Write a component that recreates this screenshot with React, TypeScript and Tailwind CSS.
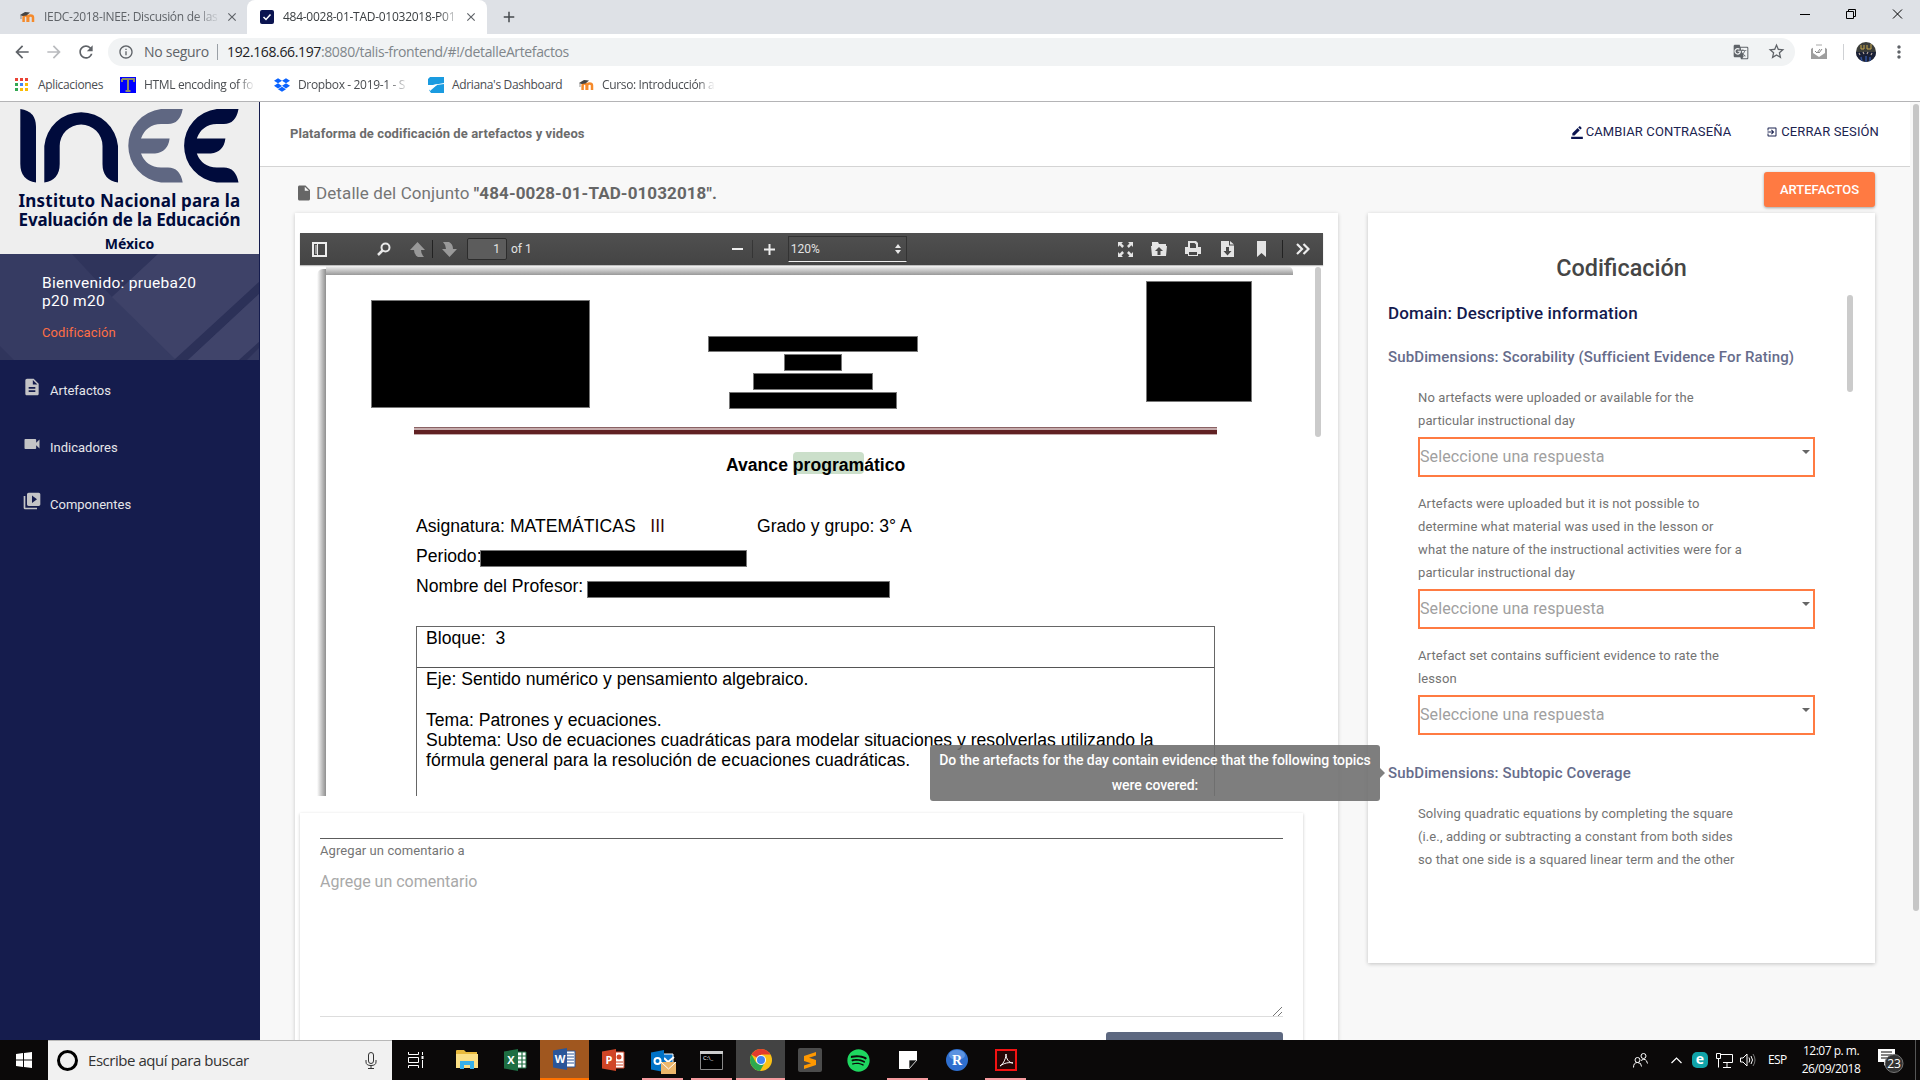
import React from "react";
import {
  MdInsertDriveFile,
  MdDescription,
  MdVideocam,
  MdVideoLibrary,
  MdBorderColor,
  MdExitToApp,
  MdArrowBack,
  MdArrowForward,
  MdRefresh,
  MdInfoOutline,
  MdStarBorder,
  MdMoreVert,
  MdClose,
  MdAdd,
  MdGTranslate,
} from "react-icons/md";
import { FaDropbox, FaSpotify } from "react-icons/fa";

const ui = "font-['Open_Sans','Noto_Sans',sans-serif]";

function Moodle() {
  return (
    <svg width="16" height="16" viewBox="0 0 16 16">
      <path d="M3.6 13V8.6q0-2.2 2-2.2t2 2.2V13M8.2 13V8.6q0-2.2 2.4-2.2t2.4 2.2V13" fill="none" stroke="#f58a2b" strokeWidth="2.5" />
      <path d="M0 6l5-3 5 .5-3.500 3-4 .5z" fill="#444" />
      <path d="M1 6v4" stroke="#666" strokeWidth=".7" />
    </svg>
  );
}

function TabStrip() {
  return (
    <div className="flex h-[34px] bg-[#dee1e6] text-[12px]">
      <div className="flex w-[247px] items-center pl-5">
        <Moodle />
        <span className="ml-2 w-[177px] overflow-hidden whitespace-nowrap tracking-[-0.3px] text-[#5f6368] [mask-image:linear-gradient(to_right,black_85%,transparent)]">
          IEDC-2018-INEE: Discusión de las
        </span>
        <MdClose className="ml-1 size-[14px] text-[#5f6368]" />
      </div>
      <div className="flex w-[240px] items-center rounded-t-lg bg-white pl-[13px]">
        <span className="flex size-[14px] items-center justify-center rounded-[2px] bg-[#0b1450]">
          <svg width="10" height="10" viewBox="0 0 10 10"><path d="M1.500 5l2.500 2.500 4.500-5" fill="none" stroke="#fff" strokeWidth="1.500" /></svg>
        </span>
        <span className="ml-[9px] w-[177px] overflow-hidden whitespace-nowrap tracking-[-0.27px] text-[#3c4043] [mask-image:linear-gradient(to_right,black_88%,transparent)]">
          484-0028-01-TAD-01032018-P01
        </span>
        <MdClose className="ml-1 size-[14px] text-[#5f6368]" />
      </div>
      <div className="flex flex-1 items-center pl-[13px]">
        <MdAdd className="size-[18px] text-[#45494d]" />
      </div>
      <svg className="h-[30px] w-[120px]" viewBox="0 0 120 30" fill="none" stroke="#000" strokeWidth="1">
        <path d="M0 14.500h10M46.500 11.500h7v7h-7zM48.500 11.500v-2h7v7h-2M93 9.500l9 9M102 9.500l-9 9" />
      </svg>
    </div>
  );
}

function AddressBar() {
  return (
    <div className="flex h-[35px] items-center bg-white pl-3 text-[#5f6368]">
      <MdArrowBack className="size-5" />
      <MdArrowForward className="ml-3 size-5 text-[#b9bbbe]" />
      <MdRefresh className="ml-3 size-5" />
      <div className="ml-3 flex h-7 w-[1687px] items-center rounded-full bg-[#f1f3f4] pl-[10px] text-[14px]">
        <MdInfoOutline className="size-4" />
        <span className="ml-[10px] w-[66px] whitespace-nowrap tracking-[-0.28px]">No seguro</span>
        <span className="ml-[7px] h-4 w-px bg-[#9aa0a6]" />
        <span className="ml-[9px] tracking-[-0.37px] whitespace-nowrap text-[#80868b]">
          <span className="text-[#202124]">192.168.66.197</span>:8080/talis-frontend/#!/detalleArtefactos
        </span>
        <MdGTranslate className="ml-auto size-4" />
        <MdStarBorder className="mr-[9px] ml-[18px] size-[19px]" />
      </div>
      <svg className="ml-4 size-4" viewBox="0 0 16 16">
        <path d="M0 5l3-2h10l3 2v10H0z" fill="#9e9e9e" />
        <path d="M2 3h12v6l-6 4-6-4z" fill="#fff" />
        <path d="M4 7l2 2 3-4M7 8l1 1 3-4" fill="none" stroke="#888" />
        <path d="M5 1h6" stroke="#aaa" />
      </svg>
      <span className="ml-4 h-4 w-px bg-[#cfd1d4]" />
      <svg className="ml-3 size-5" viewBox="0 0 20 20">
        <clipPath id="av"><circle cx="10" cy="10" r="10" /></clipPath>
        <g clipPath="url(#av)">
          <rect width="20" height="20" fill="#3b3d3a" />
          <path d="M0 10h20v10H0z" fill="#1a2036" />
          <path d="M5 3v4h3V3M11 3v4h4V2" stroke="#c9a84a" fill="none" strokeWidth="1" />
          <path d="M3 11l1 2M7 10l1 2M12 10l-1 2M16 11l-1 2" stroke="#b9a9a0" strokeWidth="1.200" />
          <path d="M5 15l1 5M10 14v6M14 15v5" stroke="#33529b" strokeWidth="1.500" />
        </g>
      </svg>
      <MdMoreVert className="ml-[13px] size-5" />
    </div>
  );
}

function Bookmarks() {
  const dots = ["#ea4335", "#ea4335", "#ea4335", "#34a853", "#4285f4", "#fbbc04", "#34a853", "#fbbc04", "#fbbc04"];
  return (
    <div className="flex h-[33px] items-center border-b border-[#b4b4b6] bg-white pb-px pl-[15px] text-[12px] tracking-[-0.35px] whitespace-nowrap text-[#4a4d51]">
      <svg width="13" height="13" viewBox="0 0 13 13">
        {dots.map((c, i) => (
          <rect key={i} x={(i % 3) * 5} y={Math.floor(i / 3) * 5} width="3" height="3" fill={c} />
        ))}
      </svg>
      <span className="ml-[10px] w-[66px]">Aplicaciones</span>
      <svg className="ml-4" width="16" height="16" viewBox="0 0 16 16">
        <rect width="16" height="16" fill="#00f" />
        <path d="M2 2h12v3M2 5V2M8 2v12M5.500 14h5" stroke="#8d8c6a" strokeWidth="2" fill="none" />
      </svg>
      <span className="ml-2 w-[111px] overflow-hidden [mask-image:linear-gradient(to_right,black_85%,transparent)]">HTML encoding of fo</span>
      <FaDropbox className="ml-[19px] size-4 text-[#0a63ff]" />
      <span className="ml-2 w-[112px] overflow-hidden [mask-image:linear-gradient(to_right,black_80%,transparent)]">Dropbox - 2019-1 - S</span>
      <svg className="ml-[18px]" width="16" height="16" viewBox="0 0 16 16">
        <path d="M2 0h14v6L5 8H0V2zM16 8v7H5z M3 16l-2-3 8-5 7-1v9z" fill="#1a9be0" />
        <path d="M0 9l10-2-8 7" fill="#fff" />
      </svg>
      <span className="ml-2 w-[111px]">Adriana's Dashboard</span>
      <span className="ml-[16px]"><Moodle /></span>
      <span className="ml-[7px] w-[113px] overflow-hidden [mask-image:linear-gradient(to_right,black_85%,transparent)]">Curso: Introducción a</span>
    </div>
  );
}

function Sidebar() {
  const items = [
    { Icon: MdDescription, label: "Artefactos" },
    { Icon: MdVideocam, label: "Indicadores" },
    { Icon: MdVideoLibrary, label: "Componentes" },
  ];
  return (
    <aside className="flex w-[260px] flex-col border-r border-[#151c4d] bg-[#151c4d]">
      <div className="flex h-[152px] flex-col items-center bg-[#eee] font-['Noto_Sans'] font-bold whitespace-nowrap text-[#000b3c]">
        <svg className="mt-[7px] h-[75px] w-full shrink-0" viewBox="0 0 259 75">
          <path d="M20.300 0Q36 2 36 18V73.500Q20.300 71 20.300 55z" fill="#000b3c" />
          <path d="M44.300 73.500V37a37 37 0 0 1 73.700 0V73.500Q102.500 71 102.500 55V37a21.400 21.400 0 0 0-42.800 0V55Q59.700 71 44.300 73.500z" fill="#000b3c" />
          <path d="M182.700 0H161a37 37 0 0 0 0 73.500H182.700Q180 58.500 168 58.500H161Q146 58 141 44.500H155Q168 43 169.600 29.500H141Q146 15.500 161 15H168Q180 15 182.700 0z" fill="#5f6782" />
          <path transform="translate(55.800 0)" d="M182.700 0H161a37 37 0 0 0 0 73.500H182.700Q180 58.500 168 58.500H161Q146 58 141 44.500H155Q168 43 169.600 29.500H141Q146 15.500 161 15H168Q180 15 182.700 0z" fill="#000b3c" />
        </svg>
        <span className="mt-[7px] text-[17px] leading-[19px] tracking-[0.2px]">Instituto Nacional para la</span>
        <span className="text-[17px] leading-[19px] tracking-[-0.18px]">Evaluación de la Educación</span>
        <span className="mt-[6px] text-[14px] leading-[17px]">México</span>
      </div>
      <div className="relative h-[106px] overflow-hidden bg-[#363b62]">
        <svg className="absolute inset-0" width="259" height="106" viewBox="0 0 259 106">
          <path d="M72 0h86l-46 43z" fill="#2f345b" />
          <path d="M158 0h101v28L176 106 112 43z" fill="#3e4268" />
          <path d="M259 28v12L188 106h-14z" fill="#2c3158" />
          <path d="M259 40v48l-20 18h-51z" fill="#40446a" />
          <path d="M259 88v6l-12 12h-8z" fill="#2c3158" />
          <path d="M0 92l14 14H0z" fill="#30355c" />
        </svg>
        <div className="relative pt-[20px] pl-[42px] text-white">
          <p className="w-[180px] text-[15.500px] leading-[18px] tracking-[0.28px]">Bienvenido: prueba20<br />p20 m20</p>
          <p className="mt-[14px] text-[13px] leading-[18px] tracking-[0.1px] text-[#ff6f45]">Codificación</p>
        </div>
      </div>
      <nav className="flex flex-col text-[13px] text-[#e6e6ea]">
        {items.map(({ Icon, label }) => (
          <div key={label} className="flex h-[57px] items-center pt-1 pl-[22px]">
            <Icon className="mr-2 -mt-2 size-5 text-[#c4c4c6]" />
            <span>{label}</span>
          </div>
        ))}
      </nav>
    </aside>
  );
}

function Sep() {
  return <span className="block h-[18px] w-px bg-[#222]" />;
}

function PdfToolbar() {
  return (
    <div className="flex h-8 w-[1023px] items-center bg-linear-to-b from-[#505050] to-[#444] text-[12px] text-[#e3e3e3] shadow-[0_1px_1px_rgba(0,0,0,0.25)]">
      <svg className="ml-[12px] size-[15px]" viewBox="0 0 15 15">
        <path d="M1 1h13v13H1z" fill="none" stroke="#eee" strokeWidth="2" />
        <path d="M3 3h2v9H3z" fill="#999" /><path d="M5.500 2v11" stroke="#eee" />
      </svg>
      <svg className="ml-[50px] size-[14px]" viewBox="0 0 14 14" fill="none" stroke="#e8e8e8" strokeWidth="2">
        <circle cx="8.500" cy="5.500" r="4" /><path d="M5.500 8.500L1 13" strokeWidth="2.500" />
      </svg>
      <svg className="ml-[19px] size-[15px]" viewBox="0 0 15 15" fill="#999"><path d="M7.500 0L15 8h-4q0 4 3 7H8q-4-2-4-7H0z" /></svg>
      <span className="ml-[7px]"><Sep /></span>
      <svg className="ml-[9px] size-[15px]" viewBox="0 0 15 15" fill="#999"><path d="M7.500 15L0 7h4q0-4-3-7h6q4 2 4 7h4z" /></svg>
      <span className="ml-[10px] flex h-[22px] w-[40px] items-center justify-end rounded-[2px] border border-[#2c2c2c] bg-[#5c5c5c] pr-[6px]">1</span>
      <span className="ml-[4px]">of 1</span>
      <span className="ml-[200px] h-[2px] w-[11px] bg-[#eee]" />
      <span className="ml-[9px] opacity-50"><Sep /></span>
      <svg className="ml-[11px] size-[11px]" viewBox="0 0 11 11"><path d="M0 5.500h11M5.500 0v11" stroke="#eee" strokeWidth="2" /></svg>
      <span className="ml-[13px] flex h-[26px] w-[119px] items-center border border-b-[#eee] border-[#333] pl-[2px] text-[12px]">
        120%
        <svg className="mr-[5px] ml-auto" width="6" height="10" viewBox="0 0 6 10" fill="#e8e8e8"><path d="M3 0l3 4H0zM3 10l3-4H0z" /></svg>
      </span>
      <svg className="ml-auto size-[15px]" viewBox="0 0 15 15" fill="#e4e4e4">
        <path d="M0 0h5L3.500 1.500 6 4 4.200 6 1.700 3.300 0 5zM15 0v5l-1.700-1.700L10.800 6 9 4l2.500-2.500L10 0zM0 15v-5l1.700 1.700L4.200 9 6 11l-2.500 2.500L5 15zM15 15h-5l1.500-1.500L9 11l1.800-2 2.500 2.700L15 10z" />
      </svg>
      <svg className="ml-[18px] size-4" viewBox="0 0 16 16" fill="#e4e4e4"><path fillRule="evenodd" d="M1 1h6l1 2h7v2H1zM0 5h16l-1 10H1zM8 6L4 10h2.500v4h3v-4H12z" /></svg>
      <svg className="ml-[18px] size-4" viewBox="0 0 16 16" fill="#e4e4e4"><path fillRule="evenodd" d="M3 0h8l2 2v4h3v7h-3v2H3v-2H0V6h3zM5 2v5h6V3.500L9.500 2zM4 11v3h8v-3z" /></svg>
      <svg className="ml-[20px] h-4 w-[13px]" viewBox="0 0 13 16" fill="#e4e4e4"><path fillRule="evenodd" d="M0 0h8v4.500h5V16H0zM5 6v4H2.500l4 4.500 4-4.500H8V6zM9 0l4 3.500H9z" /></svg>
      <svg className="ml-[23px] h-4 w-[9px]" viewBox="0 0 9 16" fill="#e4e4e4"><path d="M0 0h9v16L4.500 12 0 16z" /></svg>
      <span className="ml-[16px]"><Sep /></span>
      <svg className="mr-[13px] ml-[13px] h-3 w-[14px]" viewBox="0 0 14 12" fill="none" stroke="#eee" strokeWidth="2.200"><path d="M1 1l5 5-5 5M7.500 1l5 5-5 5" /></svg>
    </div>
  );
}

function Bar({ className }: { className: string }) {
  return <span className={"block border border-[#777] bg-black " + className} />;
}

function PdfPage() {
  return (
    <div className="flex h-[531px] w-[1023px] overflow-hidden">
      <div className="mt-[4px] ml-[17px] w-[9px] shrink-0 rounded-tl-md bg-linear-to-r from-white to-[#8f8f8f]" />
      <div className="w-[968px] shrink-0 font-['Liberation_Sans'] text-[17.600px] leading-[20.200px] whitespace-pre text-black">
        <div className="mt-px h-[9px] w-[967px] rounded-tr-md bg-linear-to-b from-[#f4f4f4] to-[#999]" />
        <div className="flex h-[152px] items-start">
          <Bar className="mt-[25px] ml-[45px] h-[108px] w-[219px]" />
          <div className="mt-[61px] ml-[118px] flex w-[210px] flex-col items-center gap-[2px]">
            <Bar className="h-[16px] w-[210px]" />
            <Bar className="h-[17px] w-[58px]" />
            <Bar className="h-[17px] w-[120px]" />
            <Bar className="h-[17px] w-[168px]" />
          </div>
          <Bar className="mt-[6px] ml-[228px] h-[121px] w-[106px]" />
        </div>
        <div className="ml-[88px] h-[8px] w-[803px] border-t border-b border-t-[#8a6264] border-b-[#c3a9aa] bg-linear-to-b from-[#c6acad] from-[33%] to-[#612123] to-[33%]" />
        <div className="mt-[17px] ml-[400px] flex h-[26px] items-center font-bold">
          <span>Avance </span>
          <span className="-mt-[4px] h-[22px] rounded-[4px] bg-[#cbdfca] pt-[3px]">program</span>
          <span>ático</span>
        </div>
        <div className="mt-[38px] ml-[90px] flex h-[21px]">
          <span className="w-[341px]">Asignatura: MATEMÁTICAS   <span className="text-[#3a0808]">III</span></span>
          <span>Grado y grupo: 3° A</span>
        </div>
        <div className="mt-[9px] ml-[90px] flex h-[21px]">
          <span className="w-[64px]">Periodo:</span>
          <Bar className="mt-[4px] h-[17px] w-[267px]" />
        </div>
        <div className="mt-[9px] ml-[90px] flex h-[21px]">
          <span className="w-[171px]">Nombre del Profesor:</span>
          <Bar className="mt-[5px] h-[17px] w-[303px]" />
        </div>
        <div className="mt-[29px] ml-[90px] h-[200px] w-[799px] border-x border-t border-[#666]">
          <p className="h-[41px] border-b border-[#555] pt-px pl-[9px]">Bloque:  3</p>
          <div className="pl-[9px] pt-px">
            <p>Eje: Sentido numérico y pensamiento algebraico.</p>
            <p className="mt-[20.400px]">Tema: Patrones y ecuaciones.</p>
            <p>Subtema: Uso de ecuaciones cuadráticas para modelar situaciones y resolverlas utilizando la</p>
            <p>fórmula general para la resolución de ecuaciones cuadráticas.</p>
          </div>
        </div>
      </div>
      <div className="mt-[2px] ml-[21px] h-[170px] w-[6px] rounded-full bg-[#cbcbcb]" />
    </div>
  );
}

function Viewer() {
  return (
    <section className="h-[840px] w-[1043px] bg-white pt-5 pl-[5px] shadow-[0_1px_4px_rgba(0,0,0,0.2)]">
      <PdfToolbar />
      <PdfPage />
      <div className="mt-[17px] h-[260px] w-[1003px] bg-white px-[20px] pt-[25px] shadow-[0_1px_3px_rgba(0,0,0,0.22)]">
        <div className="h-px bg-[#5c5c5c]" />
        <p className="mt-[3px] text-[13px] leading-[18px] tracking-[0.08px] text-[#757575]">Agregar un comentario a</p>
        <div className="relative mt-[7px] h-[150px] border-b border-[#ddd] pt-[3px] text-[16px] leading-6 text-[#a9a9a9]">
          Agrege un comentario
          <svg className="absolute right-px bottom-0" width="9" height="9" viewBox="0 0 9 9"><path d="M0 9l9-9M5 9l4-4" stroke="#777" /></svg>
        </div>
        <div className="mt-[15px] ml-auto h-10 w-[177px] rounded-[3px] bg-[#5d6880]" />
      </div>
    </section>
  );
}

function Question({ lines, gap }: { lines: string[]; gap: string }) {
  return (
    <div className={gap}>
      {lines.map((l) => (
        <p key={l} className="text-[13px] leading-[23px] tracking-[0.11px] text-[#737373]">{l}</p>
      ))}
    </div>
  );
}

function Answer() {
  return (
    <div className="mt-[5px] flex h-10 w-[397px] items-start justify-between border-2 border-[#ff7b42] pr-[3px] text-[16px] leading-[36px] tracking-[0.1px] text-[#a0a0a0]">
      <span>Seleccione una respuesta</span>
      <span className="mt-[11px] border-x-[4px] border-t-[4px] border-x-transparent border-t-[#666]" />
    </div>
  );
}

function Coding() {
  return (
    <section className="relative h-[750px] w-[507px] bg-white shadow-[0_1px_4px_rgba(0,0,0,0.22)]">
      <h2 className="pt-[41px] text-center text-[23.400px] leading-[28px] font-medium text-[#454545]">Codificación</h2>
      <div className="pl-5">
        <h3 className="mt-[19px] text-[17px] leading-6 font-medium tracking-[0.15px] text-[#141a4e]">Domain: Descriptive information</h3>
        <h4 className="mt-5 text-[15px] leading-6 font-medium tracking-[0.12px] text-[#666c8b]">SubDimensions: Scorability (Sufficient Evidence For Rating)</h4>
        <div className="pl-[30px]">
          <Question gap="mt-[17px]" lines={["No artefacts were uploaded or available for the", "particular instructional day"]} />
          <Answer />
          <Question
            gap="mt-[15px]"
            lines={[
              "Artefacts were uploaded but it is not possible to",
              "determine what material was used in the lesson or",
              "what the nature of the instructional activities were for a",
              "particular instructional day",
            ]}
          />
          <Answer />
          <Question gap="mt-[15px]" lines={["Artefact set contains sufficient evidence to rate the", "lesson"]} />
          <Answer />
        </div>
        <h4 className="mt-[26px] text-[15px] leading-6 font-medium tracking-[0.12px] text-[#666c8b]">SubDimensions: Subtopic Coverage</h4>
        <div className="pl-[30px]">
          <Question
            gap="mt-[17px]"
            lines={[
              "Solving quadratic equations by completing the square",
              "(i.e., adding or subtracting a constant from both sides",
              "so that one side is a squared linear term and the other",
            ]}
          />
        </div>
      </div>
      <span className="absolute top-[82px] left-[479px] h-[97px] w-[6px] rounded-full bg-[#cbcbcb]" />
      <div className="absolute top-[532px] right-[495px] flex items-center">
        <div className="w-[450px] rounded-[3px] bg-[#707070]/90 py-[3px] text-center text-[14px] leading-[25px] font-medium tracking-[-0.05px] text-white">
          Do the artefacts for the day contain evidence that the following topics were covered:
        </div>
        <span className="-mr-[5px] border-y-[5px] border-l-[5px] border-y-transparent border-l-[#808080]" />
      </div>
    </section>
  );
}

function Office({ color, letter, children }: { color: string; letter: string; children: React.ReactNode }) {
  return (
    <svg width="24" height="22" viewBox="0 0 24 22">
      {children}
      <path d="M0 2.500L14 0v22L0 19.500z" fill={color} />
      <text x="7" y="15" fontSize="11" fontWeight="700" textAnchor="middle" fill="#fff">{letter}</text>
    </svg>
  );
}

function Slot({ className, children }: { className?: string; children: React.ReactNode }) {
  return <div className={"flex h-10 w-[49px] shrink-0 items-center justify-center " + (className ?? "")}>{children}</div>;
}

const running = "relative after:absolute after:inset-x-[4px] after:bottom-0 after:h-[2px] after:bg-[#f59a9e]";

function Taskbar() {
  return (
    <footer className="flex h-10 bg-[#0b0909] text-white">
      <div className="flex w-12 items-center justify-center">
        <svg width="16" height="16" viewBox="0 0 16 16" fill="#fff"><path d="M0 2l7-1v6.500H0zM8 .9L16 0v7.500H8zM0 8.500h7V15l-7-1zM8 8.500h8V16l-8-1.100z" /></svg>
      </div>
      <div className="flex w-[344px] items-center border-t border-[#b8b8b8] bg-[#f1f1f1] pl-[9px] text-[#333]">
        <span className="size-[21px] rounded-full border-[3px] border-black" />
        <span className="ml-[10px] text-[15px] tracking-[-0.45px] whitespace-nowrap">Escribe aquí para buscar</span>
        <svg className="mr-[15px] ml-auto" width="12" height="17" viewBox="0 0 12 17" fill="none" stroke="#333"><rect x="3.500" y=".5" width="5" height="11" rx="2.500" /><path d="M1 8v2q0 3.500 5 3.500T11 10V8M6 13.500V16.500M3 16.500h6" /></svg>
      </div>
      <Slot className="-ml-px">
        <svg width="17" height="16" viewBox="0 0 17 16" fill="none" stroke="#fff"><path d="M1.500 0v2.500h10V0M1.500 5.500h10v5h-10zM1.500 16v-2.500h10V16M15.500 0v3M15.500 8v8" /><path d="M14.500 4h2v3h-2z" fill="#fff" stroke="none" /></svg>
      </Slot>
      <Slot className="ml-[2px]">
        <svg width="22" height="20" viewBox="0 0 22 20"><path d="M0 1q0-1 1-1h7l2 2h11v16H0z" fill="#e8b93c" /><path d="M0 4h22v14H0z" fill="#fbdf85" /><path d="M4 11h14v8h-4v-4H8v4H4z" fill="#37b0ea" /></svg>
      </Slot>
      <Slot>
        <Office color="#1e6e42" letter="X"><path d="M13 3h9v16h-9z" fill="#fff" stroke="#1e6e42" /><path d="M14 7h8M14 11h8M14 15h8M18 3v16" stroke="#1e6e42" strokeWidth="1.200" /></Office>
      </Slot>
      <Slot className="border-b-2 border-[#ff7200] bg-[#a0571f]">
        <Office color="#2a5699" letter="W"><path d="M13 3h9v16h-9z" fill="#fff" stroke="#2a5699" /><path d="M14 6h7M14 9h7M14 12h7M14 15h7" stroke="#2a5699" /></Office>
      </Slot>
      <Slot>
        <Office color="#d04526" letter="P"><path d="M13 3h9v16h-9z" fill="#fff" stroke="#d04526" /><circle cx="17" cy="8" r="2.500" fill="#d04526" /><path d="M14 13h7M14 16h7" stroke="#d04526" /></Office>
      </Slot>
      <Slot className={running}>
        <svg className="mt-[3px] ml-[2px]" width="25" height="24" viewBox="0 0 25 24"><path d="M12 4h10v13H12z" fill="#0f78d0" stroke="#fff" /><path d="M13 8l4 4 6-5" stroke="#fff" strokeWidth="2" fill="none" /><path d="M0 2.500L13 0v22L0 19.500z" fill="#0072c6" /><circle cx="6.500" cy="11" r="3" fill="none" stroke="#fff" strokeWidth="2" /><path d="M10 12h15v12H10z" fill="#ecb66b" /><path d="M10 12l7.500 7 7.500-7" stroke="#fff" fill="none" /></svg>
      </Slot>
      <Slot className={running}>
        <svg width="23" height="19" viewBox="0 0 23 19"><path d="M.5.500h22v18H.5z" fill="#000" stroke="#888" /><path d="M0 0h23v3H0z" fill="#ccc" /><text x="3" y="9" fontSize="6" fill="#fff">C:\_</text></svg>
      </Slot>
      <Slot className="relative bg-[#434343] after:absolute after:inset-x-0 after:bottom-0 after:h-[2px] after:bg-[#f59a9e]">
        <svg width="22" height="22" viewBox="0 0 22 22"><circle cx="11" cy="11" r="11" fill="#fbc116" /><path d="M11 11L1.500 5.500A11 11 0 0 1 20.500 5.500H11z" fill="#e33b2e" /><path d="M1.500 5.500A11 11 0 0 0 10 22l4.800-8.500L6.200 13.700z" fill="#2da94f" /><circle cx="11" cy="11" r="5" fill="#fff" /><circle cx="11" cy="11" r="4" fill="#4285f4" /></svg>
      </Slot>
      <Slot>
        <svg width="24" height="24" viewBox="0 0 24 24"><rect width="24" height="24" rx="2" fill="#4b4b4b" /><path d="M18 4L6 8v5l7 2.200L6 17.500V21l12-4v-5l-7-2.200 7-2.300z" fill="#ff9800" /></svg>
      </Slot>
      <Slot><FaSpotify className="size-[23px] text-[#1ed760]" /></Slot>
      <Slot className={running}>
        <svg width="18" height="18" viewBox="0 0 18 18"><path d="M0 0h18v9l-8 9H0z" fill="#fff" /><path d="M10 9h8l-8 9z" fill="#111" stroke="#fff" strokeWidth=".7" /></svg>
      </Slot>
      <Slot>
        <svg width="22" height="22" viewBox="0 0 22 22"><circle cx="11" cy="11" r="11" fill="#2f6fcf" /><ellipse cx="11" cy="6" rx="8" ry="5" fill="#7cabec" opacity=".6" /><text x="11" y="16" textAnchor="middle" fontSize="14" fontWeight="700" fill="#fff" className="font-['Liberation_Serif']">R</text></svg>
      </Slot>
      <Slot className={running}>
        <svg width="22" height="22" viewBox="0 0 22 22"><path d="M1 1h20v20H1z" fill="#250606" stroke="#f31212" strokeWidth="2" /><path d="M5 17c2-1 6-6 6-12 0 5 3 9 7 9-4-1-9 0-13 3z" fill="none" stroke="#fff" /></svg>
      </Slot>
      <div className="ml-auto flex w-[284px] items-center text-[12px]">
        <svg className="ml-[2px] shrink-0" width="15" height="15" viewBox="0 0 15 15" fill="none" stroke="#fff"><circle cx="10.500" cy="3" r="2.500" /><circle cx="4.500" cy="7" r="2.500" /><path d="M.5 14.500q0-5 4-5t4 4M8 7.500q5-3.500 6.500 3" /></svg>
        <svg className="ml-[23px] shrink-0" width="11" height="7" viewBox="0 0 11 7" fill="none" stroke="#fff" strokeWidth="1.200"><path d="M.5 6l5-5 5 5" /></svg>
        <span className="ml-[10px] flex size-4 shrink-0 items-center justify-center rounded-[5px] bg-[#10a3a8] pb-[2px] text-[14px] leading-none font-bold">e</span>
        <svg className="ml-[8px] shrink-0" width="17" height="15" viewBox="0 0 17 15" fill="none" stroke="#fff"><path d="M5 1.500h11.500v8H7M11 10v4M7 14.500h8M.5.500h4v5h-4zM2.500 5.500v9" /></svg>
        <svg className="ml-[7px] shrink-0" width="16" height="14" viewBox="0 0 16 14" fill="none" stroke="#fff"><path d="M.5 5h2.500l4-4v12l-4-4H.5zM9 4.500q1.500 2.500 0 5M11 3q3 4 0 8" /><path d="M13 1q4 6 0 12" stroke="#777" /></svg>
        <span className="ml-[12px] w-[20px] shrink-0 text-[12px] tracking-[-0.6px]">ESP</span>
        <div className="ml-[12px] w-[62px] shrink-0 text-center leading-[18px] tracking-[-0.5px] whitespace-nowrap">12:07 p. m.<br />26/09/2018</div>
        <svg className="ml-[16px] shrink-0" width="27" height="25" viewBox="0 0 27 25"><path d="M0 1h17v13H9l-3 4v-4H0z" fill="#fff" /><path d="M3 4h11M3 7h11M3 10h8" stroke="#0b0909" /><circle cx="16" cy="15.500" r="9" fill="#333" stroke="#777" /><text x="16" y="20" fontSize="12" textAnchor="middle" fill="#fff">23</text></svg>
      </div>
      <span className="mr-[4px] h-full w-px bg-[#555]" />
    </footer>
  );
}

export default function App() {
  return (
    <div className={"flex h-[1080px] w-[1920px] flex-col overflow-hidden bg-white " + ui}>
      <TabStrip />
      <AddressBar />
      <Bookmarks />
      <div className="flex h-[938px] overflow-hidden font-[Roboto]">
        <Sidebar />
        <main className="w-[1650px] bg-[#f8f8f8]">
          <header className="flex h-[65px] items-center border-b border-[#d4d4d4] bg-white pl-[30px] text-[13px]">
            <span className="font-bold tracking-[0.1px] text-[#6c6c6c]">Plataforma de codificación de artefactos y videos</span>
            <span className="ml-auto flex items-center pb-1 tracking-[0.12px] text-[#1b2350]">
              <MdBorderColor className="mr-[2px] size-[14px] text-[#0b1450]" />CAMBIAR CONTRASEÑA
            </span>
            <span className="mr-[31px] ml-[35px] flex items-center pb-1 tracking-[0.12px] text-[#1b2350]">
              <MdExitToApp className="mr-[3px] size-[12px]" />CERRAR SESIÓN
            </span>
          </header>
          <div className="flex h-[46px] items-start justify-between pr-[35px] pl-[35px]">
            <h1 className="flex items-center pt-[14px] text-[17px] leading-6 tracking-[0.1px] text-[#757575]">
              <MdInsertDriveFile className="mr-[3px] size-[18px] text-[#666]" />
              <span>Detalle del Conjunto <b className="text-[#666]">"484-0028-01-TAD-01032018".</b></span>
            </h1>
            <button className="mt-[5px] h-[35px] w-[111px] rounded-[3px] bg-[#ff7a42] text-[13px] font-medium text-white shadow-[0_1px_3px_rgba(0,0,0,0.35)]">ARTEFACTOS</button>
          </div>
          <div className="flex items-start gap-[30px] pl-[35px]">
            <Viewer />
            <Coding />
          </div>
        </main>
        <div className="flex-1 bg-[#f8f8f8] pt-[2px] pl-[3px]">
          <div className="h-[807px] w-[6px] rounded-full bg-[#c6c6c6]" />
        </div>
      </div>
      <Taskbar />
    </div>
  );
}
